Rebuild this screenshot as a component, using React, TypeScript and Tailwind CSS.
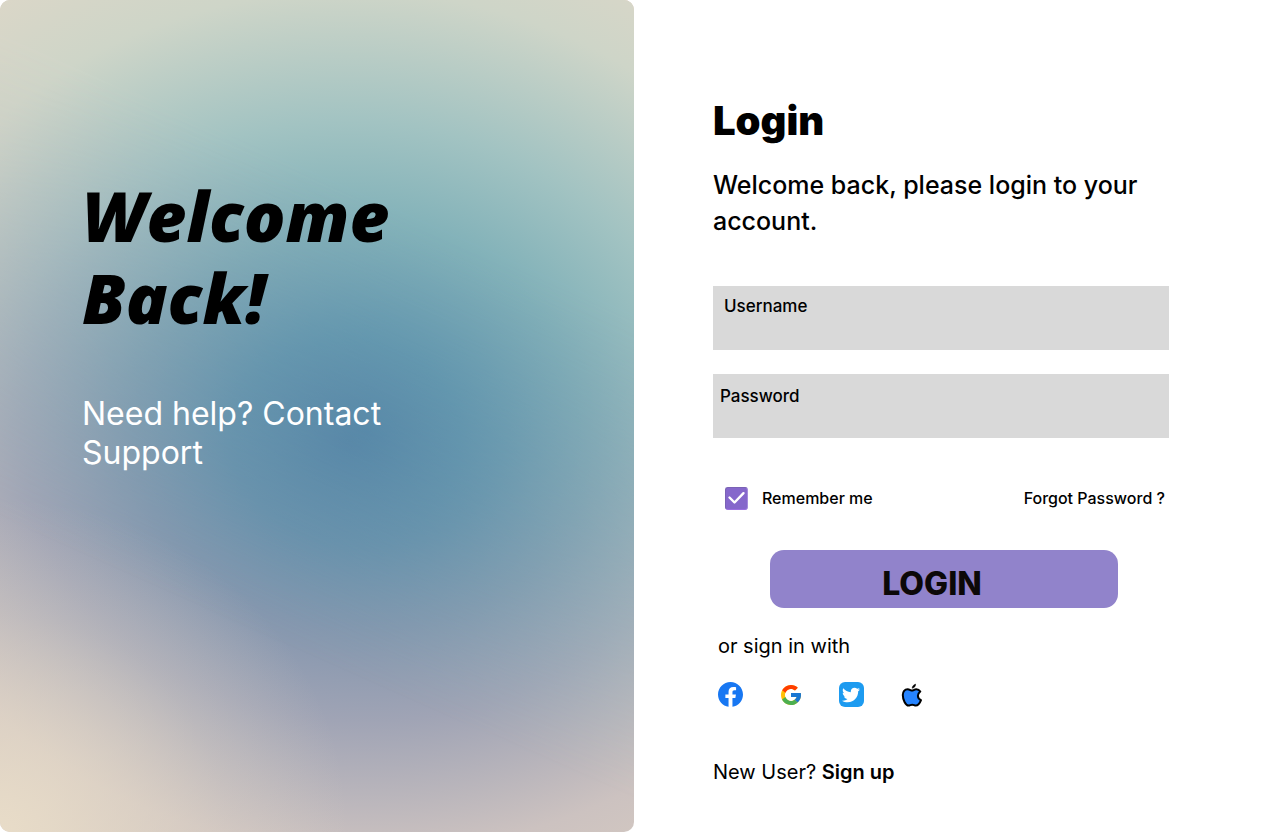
import { FcGoogle } from "react-icons/fc";
import { FaTwitter } from "react-icons/fa";

function FacebookLogo() {
  return (
    <svg viewBox="0 0 256 256" className="size-[25px]" aria-hidden="true">
      <path
        fill="#1877F2"
        d="M256 128C256 57.308 198.692 0 128 0S0 57.308 0 128c0 63.888 46.808 116.843 108 126.445V165H75.5v-37H108V99.8c0-32.08 19.11-49.8 48.348-49.8C170.352 50 185 52.5 185 52.5V84h-16.14C152.959 84 148 93.867 148 103.99V128h35.5l-5.675 37H148v89.445c61.192-9.602 108-62.557 108-126.445"
      />
    </svg>
  );
}

function AppleLogo() {
  return (
    <svg viewBox="0 0 24 24" className="size-6" fill="none" aria-hidden="true">
      <path
        d="M12 7.6C10.800 7.600 9.600 6.300 7.500 6.300C4.800 6.300 2.800 8.500 2.800 12C2.800 16.500 5.500 22.600 8.600 22.600C10 22.600 10.600 21.700 12.200 21.700C13.800 21.700 14.400 22.600 15.800 22.600C18 22.600 20 19.800 21 17.200C19 16.300 17.900 14.700 17.900 12.800C17.900 11 18.700 9.700 20.300 8.500C19.300 7 17.800 6.300 16.200 6.300C14.400 6.300 13.200 7.600 12 7.600Z"
        fill="#2684FF"
        stroke="#000"
        strokeWidth="2"
        strokeLinejoin="round"
      />
      <path d="M12.200 5.200C12.300 3.200 13.600 1.700 15.600 1.200C15.500 3.300 14.200 4.900 12.200 5.200Z" fill="#000" stroke="#000" strokeWidth="0.600" />
    </svg>
  );
}

function Field({ id, label, type, inset }: { id: string; label: string; type: string; inset: string }) {
  return (
    <div className={`flex h-16 flex-col bg-[#d9d9d9] ${inset}`}>
      <label htmlFor={id} className="text-[17px] leading-6 font-medium">
        {label}
      </label>
      <input id={id} type={type} className="min-h-0 w-full flex-1 bg-transparent text-base outline-none" />
    </div>
  );
}

export default function App() {
  return (
    <div className="flex min-h-screen bg-white font-['Inter',sans-serif] text-black">
      <aside className="grid w-[49.53%] overflow-hidden rounded-[10px] bg-[radial-gradient(ellipse_88%_56%_at_58%_52%,#5888a8_0%,#6c8fab_25%,#8496ae_42%,#a0a4b5_62%,#ccc2c0_90%,#d8ccc2_112%)]">
        <div className="col-start-1 row-start-1 bg-[radial-gradient(ellipse_88%_60%_at_55%_53%,#5888a8_0%,#629bb0_20%,#7fb0b8_42%,#a2c3c2_64%,#ced5c8_90%,#dcd7c8_110%)] [mask-image:linear-gradient(24deg,transparent_28%,black_72%)]" />
        <div className="col-start-1 row-start-1 bg-[radial-gradient(ellipse_55%_40%_at_0%_100%,#e8dcc8_0%,#e8dcc8a0_30%,#e8dcc840_65%,#e8dcc800_100%),radial-gradient(ellipse_60%_40%_at_100%_0%,#e8dac8_10%,#e8dac8a0_35%,#e8dac840_65%,#e8dac800_100%)]" />
        <div className="z-10 col-start-1 row-start-1 pt-[174px] pr-8 pl-[82px]">
          <h1 className="max-w-[360px] font-['Open_Sans',sans-serif] text-[69px] leading-[82px] font-extrabold italic">
            Welcome Back!
          </h1>
          <p className="mt-14 max-w-[340px] text-[32px] leading-[39px] font-normal text-white">
            Need help? Contact Support
          </p>
        </div>
      </aside>

      <main className="flex-1 pt-[91px] pr-8 pl-[79px]">
        <form className="max-w-[456px]" onSubmit={(e) => e.preventDefault()}>
          <h2 className="text-[40px] leading-[60px] font-black">Login</h2>
          <p className="mt-4 text-[25px] leading-9 font-medium">Welcome back, please login to your account.</p>

          <div className="mt-[47px] flex flex-col gap-6">
            <Field id="username" label="Username" type="text" inset="px-[11px] pt-2" />
            <Field id="password" label="Password" type="password" inset="px-[7px] pt-[10px]" />
          </div>

          <div className="mt-12 flex items-center justify-between pr-1 pl-3 text-base leading-6 font-medium">
            <label className="flex items-center gap-[14px]">
              <span className="grid size-[23px]">
                <input
                  type="checkbox"
                  defaultChecked
                  className="peer col-start-1 row-start-1 size-full appearance-none rounded-[3px] border border-[#7a62b5] border-r-[#a58bdc] border-b-[#9a6fe0] bg-[#8567cb]"
                />
                <svg
                  viewBox="0 0 23 23"
                  className="pointer-events-none invisible col-start-1 row-start-1 peer-checked:visible"
                  fill="none"
                  stroke="#fff"
                  strokeWidth="2.400"
                  strokeLinecap="round"
                  strokeLinejoin="round"
                  aria-hidden="true"
                >
                  <path d="M4.500 10.500L9.500 15.500L18.500 6.200" />
                </svg>
              </span>
              Remember me
            </label>
            <a href="#forgot">Forgot Password ?</a>
          </div>

          <button
            type="submit"
            className="mt-10 ml-[57px] block h-[58px] w-[348px] rounded-[14px] bg-[#9183cb] pt-[10px] pr-6 text-[32px] leading-[48px] font-extrabold text-[#0c0808]"
          >
            LOGIN
          </button>

          <p className="mt-[26px] pl-[5px] text-xl leading-6">or sign in with</p>

          <div className="mt-6 flex items-center gap-9 pl-[5px]">
            <button type="button" aria-label="Facebook">
              <FacebookLogo />
            </button>
            <button type="button" aria-label="Google">
              <FcGoogle className="size-6" />
            </button>
            <button
              type="button"
              aria-label="Twitter"
              className="flex size-[25px] items-center justify-center rounded-[6px] bg-[#1d9bf0]"
            >
              <FaTwitter className="size-[18px] text-white" />
            </button>
            <button type="button" aria-label="Apple">
              <AppleLogo />
            </button>
          </div>

          <p className="mt-[53px] text-xl leading-6">
            New User?{" "}
            <a href="#signup" className="font-semibold">
              Sign up
            </a>
          </p>
        </form>
      </main>
    </div>
  );
}
